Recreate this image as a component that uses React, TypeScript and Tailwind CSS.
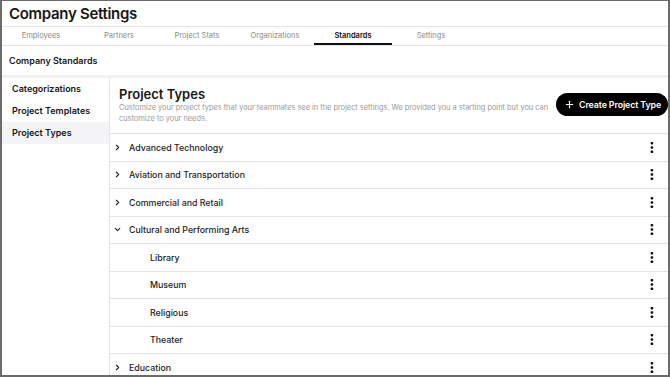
import React from "react";
import { ChevronRight, ChevronDown, Plus } from "lucide-react";

const tabs: { label: string; active?: boolean }[] = [
  { label: "Employees" },
  { label: "Partners" },
  { label: "Project Stats" },
  { label: "Organizations" },
  { label: "Standards", active: true },
  { label: "Settings" },
];

const sideItems: { label: string; active?: boolean }[] = [
  { label: "Categorizations" },
  { label: "Project Templates" },
  { label: "Project Types", active: true },
];

const rows: { label: string; level: number; open?: boolean }[] = [
  { label: "Advanced Technology", level: 0 },
  { label: "Aviation and Transportation", level: 0 },
  { label: "Commercial and Retail", level: 0 },
  { label: "Cultural and Performing Arts", level: 0, open: true },
  { label: "Library", level: 1 },
  { label: "Museum", level: 1 },
  { label: "Religious", level: 1 },
  { label: "Theater", level: 1 },
  { label: "Education", level: 0 },
];

function KebabIcon() {
  return (
    <svg width="4" height="11" viewBox="0 0 4 11" fill="#111">
      <rect x="0.6" y="0" width="2.6" height="2.6" rx="0.8" />
      <rect x="0.6" y="4.2" width="2.6" height="2.6" rx="0.8" />
      <rect x="0.6" y="8.4" width="2.6" height="2.6" rx="0.8" />
    </svg>
  );
}

export default function App() {
  return (
    <div className="h-[377px] w-[670px] overflow-hidden border-2 border-t border-[#6b6b6b] bg-white font-['Inter',sans-serif] text-[#161616]">
      <div className="flex h-[26px] items-center border-b border-[#e6e6e6] px-[7px]">
        <h1 className="text-[15px] font-semibold leading-none tracking-[-0.3px]">
          Company Settings
        </h1>
      </div>

      <div className="flex h-[19px] border-b border-[#e4e4e4]">
        {tabs.map((tab) => (
          <div
            key={tab.label}
            className={
              tab.active
                ? "flex w-[78px] items-center justify-center border-b-2 border-[#111] pt-[2px] text-[7.5px] font-semibold text-[#111]"
                : "flex w-[78px] items-center justify-center text-[7.5px] text-[#8a8a8a]"
            }
          >
            {tab.label}
          </div>
        ))}
      </div>

      <div className="flex h-[29px] items-center px-[7px] text-[9px] font-semibold">
        Company Standards
      </div>
      <div className="h-[3px] bg-[#f1f1f4]" />

      <div className="flex h-full">
        <div className="w-[108px] shrink-0 border-r border-[#e6e6e6]">
          {sideItems.map((item) => (
            <div
              key={item.label}
              className={
                item.active
                  ? "flex h-[22px] items-center bg-[#f4f4f6] px-[10px] text-[9px] font-semibold"
                  : "flex h-[22px] items-center px-[10px] text-[9px] font-semibold"
              }
            >
              {item.label}
            </div>
          ))}
        </div>

        <div className="min-w-0 flex-1">
          <div className="flex h-[56px] justify-between border-b border-[#e3e3e3] pl-[9px]">
            <div className="pt-[8px]">
              <h2 className="text-[13px] font-semibold leading-[16px]">
                Project Types
              </h2>
              <p className="w-[432px] text-[7.4px] leading-[11px] text-[#9a9a9a]">
                Customize your project types that your teammates see in the
                project settings. We provided you a starting point but you can
                customize to your needs.
              </p>
            </div>
            <button className="mt-[15px] flex h-[23px] w-[112px] shrink-0 items-center gap-[4px] self-start whitespace-nowrap rounded-full bg-black pl-[8px] text-[8.8px] font-semibold tracking-[-0.1px] text-white">
              <Plus size={11} strokeWidth={2.5} />
              Create Project Type
            </button>
          </div>

          {rows.map((row) => (
            <div
              key={row.label}
              className="flex h-[27.5px] items-center border-b border-[#e3e3e3] pr-[14px] text-[8.8px] font-medium text-[#222]"
            >
              {row.level === 0 ? (
                <span className="flex w-[19px] justify-end pr-[7px]">
                  {row.open ? (
                    <ChevronDown size={9} strokeWidth={3} />
                  ) : (
                    <ChevronRight size={9} strokeWidth={3} />
                  )}
                </span>
              ) : (
                <span className="w-[40px]" />
              )}
              <span className="flex-1">{row.label}</span>
              <KebabIcon />
            </div>
          ))}
        </div>
      </div>
    </div>
  );
}
